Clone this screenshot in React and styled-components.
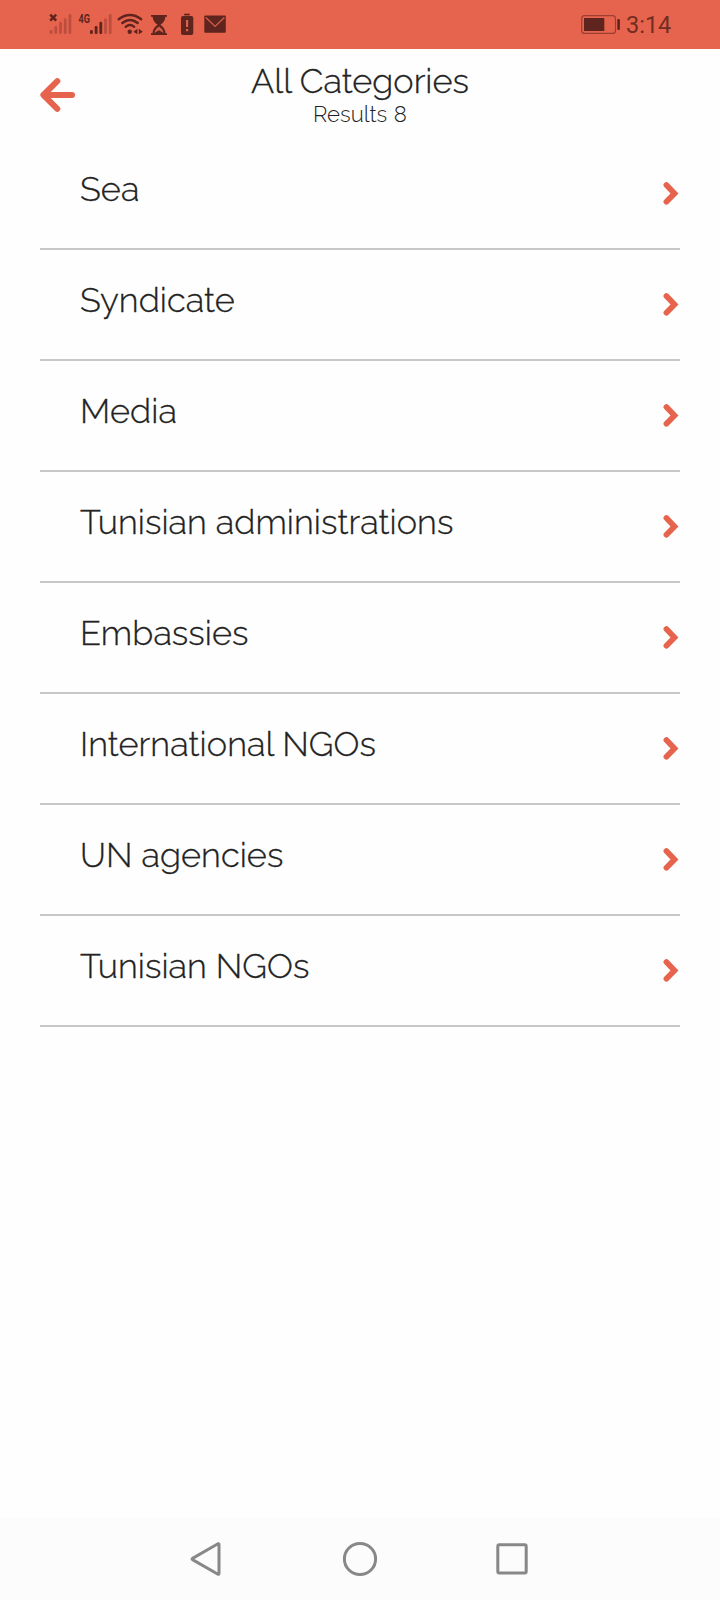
import React from 'react';
import styled, { createGlobalStyle } from 'styled-components';

const coral = '#e6644d';
const dark = '#5f241d';
const faded = '#bd4e3f';

const GlobalStyle = createGlobalStyle`
  * { box-sizing: border-box; }
  body { margin: 0; background: #fefefe; }
`;

const Screen = styled.main`
  display: flex;
  flex-direction: column;
  width: 720px;
  height: 1600px;
  background: #fefefe;
  color: #222;
  font-family: Raleway, Lato, sans-serif;
  font-weight: 300;
`;

const StatusBar = styled.div`
  display: flex;
  justify-content: space-between;
  height: 49px;
  padding: 0 48px;
  background: ${coral};
`;

const StatusGroup = styled.div`
  display: flex;
  align-items: center;
`;

const Clock = styled.span`
  width: 46px;
  margin-left: 5px;
  padding-top: 1px;
  color: #722c23;
  font: 400 23.5px/48px Roboto, sans-serif;
`;

const Header = styled.header`
  display: grid;
  grid-template-columns: 35px 1fr 35px;
  height: 90px;
  padding: 0 40px;
`;

const BackButton = styled.button`
  align-self: start;
  height: 36px;
  margin-top: 28px;
  padding: 0;
  border: 0;
  background: none;
`;

const Heading = styled.div`
  display: flex;
  flex-direction: column;
  align-items: center;
  padding-top: 12px;
`;

const Title = styled.h1`
  margin: 0;
  font-size: 34.3px;
  font-weight: 300;
  line-height: 40px;
  white-space: nowrap;
  -webkit-text-stroke: 0.3px;
`;

const Count = styled.p`
  margin: 0;
  font-size: 22.2px;
  line-height: 26px;
  word-spacing: 1px;
`;

const List = styled.ul`
  flex: 1;
  margin: 0;
  padding: 0 40px;
  list-style: none;
`;

const Row = styled.li`
  display: flex;
  align-items: center;
  justify-content: space-between;
  height: 111px;
  padding-left: 40px;
  border-bottom: 2px solid #c7c7c9;
`;

const Label = styled.span`
  padding-bottom: 10px;
  font-size: 34.3px;
  line-height: 40px;
  letter-spacing: 0.07px;
  white-space: nowrap;
  -webkit-text-stroke: 0.3px;
`;

const NavBar = styled.nav`
  display: flex;
  align-items: center;
  justify-content: space-between;
  height: 82px;
  padding: 0 190px;
  background: #fcfcfc;
`;

const Icon = styled.svg`
  display: block;
  flex: none;
`;

const categories = [
  'Sea',
  'Syndicate',
  'Media',
  'Tunisian administrations',
  'Embassies',
  'International NGOs',
  'UN agencies',
  'Tunisian NGOs',
];

const SignalBars = ({ x, strength }) =>
  [4, 8, 12.3, 15.8, 20].map((h, i) => (
    <rect key={h} x={x + i * 4.7} y={34 - h} width="2.8" height={h} rx="1.2" fill={i < strength ? dark : faded} />
  ));

const StatusIcons = () => (
  <Icon width="180" height="49" viewBox="48 0 180 49">
    <path d="M50.2 14.6l6 6M56.2 14.6l-6 6" stroke={dark} strokeWidth="2.5" />
    <SignalBars x={49.7} strength={0} />
    <text x="78.5" y="23" fill={dark} fontFamily="Roboto, sans-serif" fontWeight="700" fontSize="12.5" textLength="11.5" lengthAdjust="spacingAndGlyphs">4G</text>
    <SignalBars x={90} strength={3} />
    <g fill="none" stroke={dark} strokeWidth="2.4" strokeLinecap="round">
      <path d="M118.7 19.2Q130 11 141.2 19.2" />
      <path d="M122.3 23Q130 17 137.7 23" />
      <path d="M125.7 26.8Q130 23.2 134.2 26.8" />
    </g>
    <circle cx="129.7" cy="31.8" r="2.2" fill={dark} />
    <path d="M137.4 28.7v5.6l-4-2.6zM138.8 28.7v5.6l4-2.6z" fill={dark} />
    <path d="M151 15h16v1.7h-1.6c-.2 4-2.7 6.4-5 8.1 2.7 1.8 4.9 4.4 5.1 8.4h1.5V35h-16v-1.8h1.5c.2-4 2.4-6.6 5.1-8.4-2.3-1.7-4.8-4.1-5-8.1H151z" fill={dark} />
    <path d="M154.5 32.9c.5-3 2.3-5.1 4.5-6.4 2.2 1.3 4 3.4 4.5 6.4l-4.5-2.6z" fill="#d45c48" />
    <path d="M156.2 33.2l2.8-2.4 2.8 2.4z" fill={dark} />
    <path d="M184.2 13.7h5.6v1.7h-5.6z" fill={dark} />
    <rect x="181" y="16" width="12.3" height="19" rx="2" fill={dark} />
    <path d="M187.1 20v7M187.1 29v2.2" stroke={coral} strokeWidth="2" />
    <rect x="204.3" y="15.5" width="21.5" height="17.3" rx="1" fill={dark} />
    <path d="M205.8 17.5l9.3 8.9 9.3-8.9" fill="none" stroke="#d45c48" strokeWidth="1.4" />
  </Icon>
);

const BatteryIcon = () => (
  <Icon width="40" height="49" viewBox="581 0 40 49">
    <rect x="581.7" y="15.6" width="33.8" height="17.8" rx="3" fill="none" stroke="#9c3e32" strokeWidth="1.2" />
    <rect x="584" y="18" width="20.3" height="13" fill={dark} />
    <rect x="617.3" y="19" width="2.6" height="11" rx="1" fill={dark} />
  </Icon>
);

const BackArrow = () => (
  <Icon width="36" height="36" viewBox="0 0 36 36" fill="none" stroke={coral} strokeWidth="6">
    <path d="M17.3 4.2L3.4 18L17.3 31.8" strokeLinecap="round" strokeLinejoin="round" />
    <path d="M5 18H32" strokeLinecap="round" />
  </Icon>
);

const Chevron = () => (
  <Icon width="17" height="24" viewBox="0 0 17 24">
    <path d="M3.4 3.1l8.1 8.3-8.1 8.3" fill="none" stroke={coral} strokeWidth="5.7" strokeLinecap="round" />
  </Icon>
);

export default function App() {
  return (
    <Screen>
      <GlobalStyle />
      <StatusBar>
        <StatusGroup><StatusIcons /></StatusGroup>
        <StatusGroup><BatteryIcon /><Clock>3:14</Clock></StatusGroup>
      </StatusBar>
      <Header>
        <BackButton aria-label="Back"><BackArrow /></BackButton>
        <Heading>
          <Title>All Categories</Title>
          <Count>Results 8</Count>
        </Heading>
      </Header>
      <List>
        {categories.map((name) => (
          <Row key={name}>
            <Label>{name}</Label>
            <Chevron />
          </Row>
        ))}
      </List>
      <NavBar>
        <Icon width="34" height="36" viewBox="0 0 34 36" fill="none" stroke="#888" strokeWidth="3">
          <path d="M2.5 17.4L28 2.8Q29 2.5 29 3.4V32.6Q29 33.5 28 33.2L2.5 18.6Q1.7 18 2.5 17.4Z" strokeLinejoin="round" />
        </Icon>
        <Icon width="36" height="36" viewBox="0 0 36 36" fill="none" stroke="#888" strokeWidth="3">
          <circle cx="18" cy="18" r="15.6" />
        </Icon>
        <Icon width="34" height="36" viewBox="0 0 34 36" fill="none" stroke="#888" strokeWidth="3">
          <rect x="1.8" y="3.7" width="28.4" height="28.4" rx="1.5" />
        </Icon>
      </NavBar>
    </Screen>
  );
}
